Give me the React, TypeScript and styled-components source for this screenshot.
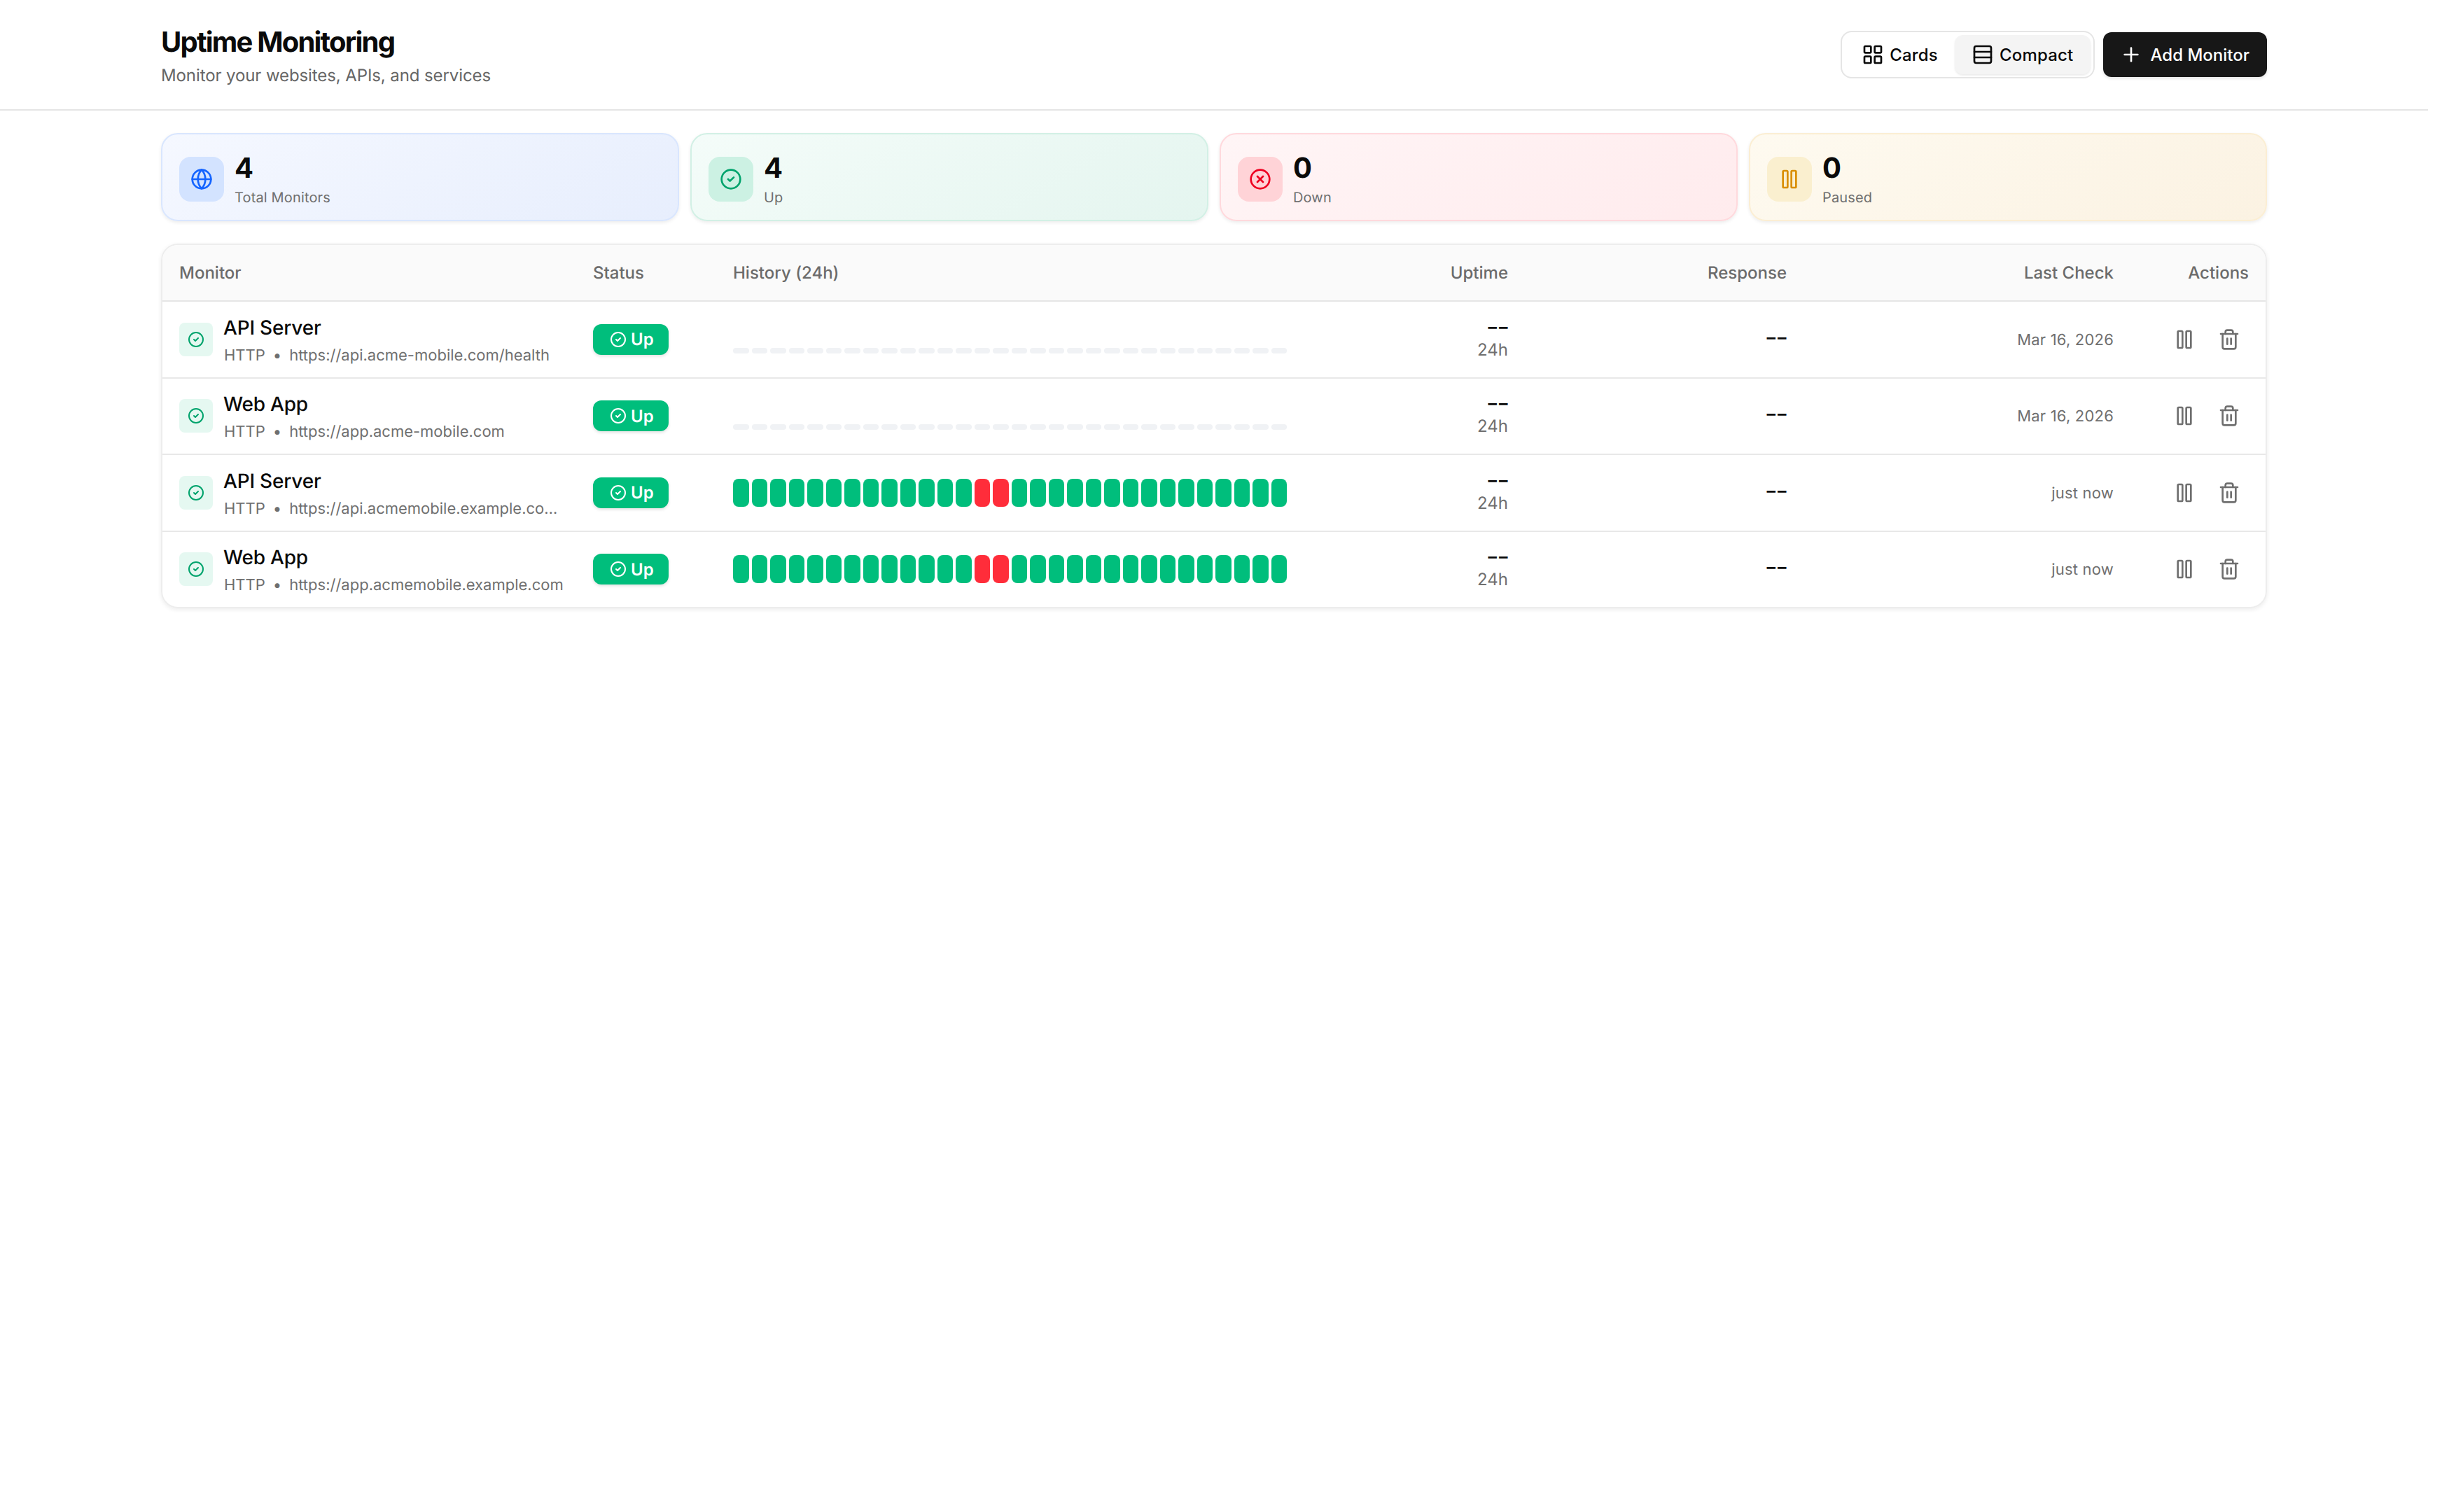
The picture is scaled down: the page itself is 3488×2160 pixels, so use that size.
import { CircleCheck, CircleX, Globe, LayoutGrid, Pause, Plus, Rows3, Trash2 } from 'lucide-react';
import styled, { createGlobalStyle } from 'styled-components';

const GlobalStyle = createGlobalStyle`
  html, body {
    margin: 0;
    background: #fff;
  }
  body {
    font-family: Inter, "Liberation Sans", sans-serif;
    color: #0a0a0a;
    text-rendering: geometricPrecision;
    -webkit-font-smoothing: antialiased;
  }
`;

const Page = styled.div`
  width: 3468px;
  min-height: 2160px;
`;

const Header = styled.header`
  height: 156px;
  padding: 0 230px;
  box-sizing: content-box;
  width: 3008px;
  display: flex;
  justify-content: space-between;
  align-items: center;
  border-bottom: 2px solid #e5e5e5;
`;

const TitleBlock = styled.div`
  padding-top: 4px;
`;

const Title = styled.h1`
  margin: 0 0 8px;
  font-size: 40px;
  line-height: 48px;
  font-weight: 700;
  letter-spacing: -1.8px;
`;

const Subtitle = styled.p`
  margin: 0;
  font-size: 24px;
  line-height: 32px;
  letter-spacing: -0.1px;
  color: #666;
`;

const HeaderActions = styled.div`
  display: flex;
  align-items: center;
  gap: 12px;
`;

const Toggle = styled.div`
  display: flex;
  padding: 4px;
  border: 2px solid #e5e5e5;
  border-radius: 16px;
  background: #fff;
`;

const ToggleButton = styled.button<{ $active?: boolean }>`
  display: flex;
  align-items: center;
  gap: 8px;
  height: 56px;
  padding: 0 24px;
  border: 0;
  border-radius: 12px;
  background: ${(p) => (p.$active ? '#f4f4f4' : 'transparent')};
  box-shadow: ${(p) => (p.$active ? '0 2px 3px rgba(0,0,0,0.08)' : 'none')};
  font: 500 24px Inter, sans-serif;
  letter-spacing: 0.2px;
  color: #0a0a0a;
`;

const AddButton = styled.button`
  display: flex;
  align-items: center;
  gap: 12px;
  height: 64px;
  padding: 0 25px 0 24px;
  border: 0;
  border-radius: 12px;
  background: #171717;
  color: #fff;
  font: 500 24px Inter, sans-serif;
  box-shadow: 0 2px 4px rgba(0, 0, 0, 0.12);
`;

const Content = styled.main`
  padding: 32px 230px;
`;

const StatGrid = styled.section`
  display: grid;
  grid-template-columns: repeat(4, 1fr);
  gap: 16px;
  margin-bottom: 32px;
`;

type Tone = { from: string; to: string; border: string; tile: string; ink: string };

const tones: Record<string, Tone> = {
  blue: { from: '#f5f8ff', to: '#e7eefd', border: '#d9e6fe', tile: '#d3e3ff', ink: '#1464ff' },
  green: { from: '#f4fcf9', to: '#e4f5ef', border: '#d2f0e5', tile: '#ccf1e3', ink: '#00a36c' },
  red: { from: '#fff5f6', to: '#ffebed', border: '#ffd9dd', tile: '#ffd3d7', ink: '#ee0020' },
  amber: { from: '#fefaf0', to: '#fbf2e2', border: '#fbeed3', tile: '#faefcf', ink: '#d98e00' },
};

const StatCard = styled.div<{ $tone: Tone }>`
  height: 126px;
  box-sizing: border-box;
  padding: 24px;
  display: flex;
  align-items: flex-start;
  gap: 15px;
  border: 2px solid ${(p) => p.$tone.border};
  border-radius: 24px;
  background: linear-gradient(150deg, ${(p) => p.$tone.from}, ${(p) => p.$tone.to});
  box-shadow: 0 2px 5px rgba(0, 0, 0, 0.08);
`;

const StatTile = styled.div<{ $tone: Tone }>`
  width: 64px;
  height: 64px;
  margin-top: 8px;
  display: flex;
  align-items: center;
  justify-content: center;
  border-radius: 16px;
  background: ${(p) => p.$tone.tile};
  color: ${(p) => p.$tone.ink};
`;

const StatValue = styled.div`
  font-size: 40px;
  line-height: 48px;
  font-weight: 700;
`;

const StatLabel = styled.div`
  margin-top: 6px;
  font-size: 20px;
  line-height: 24px;
  letter-spacing: 0.15px;
  color: #6f6f6f;
`;

const Table = styled.section`
  border: 2px solid #ededed;
  border-radius: 24px;
  overflow: hidden;
  box-shadow: 0 2px 6px rgba(0, 0, 0, 0.08);
`;

const columns = '591px 200px 841px 314px 398px 467px 193px';

const HeadRow = styled.div`
  display: grid;
  grid-template-columns: ${columns};
  height: 79px;
  align-items: center;
  background: #fafafa;
  border-bottom: 2px solid #e6e6e6;
`;

const HeadCell = styled.div<{ $right?: boolean }>`
  padding: 0 24px;
  text-align: ${(p) => (p.$right ? 'right' : 'left')};
  font-size: 24px;
  font-weight: 500;
  color: #6b6b6b;
`;

const Row = styled.div`
  display: grid;
  grid-template-columns: ${columns};
  height: 107.5px;
  align-items: center;
  border-bottom: 2px solid #e8e8e8;

  &:last-child {
    border-bottom: 0;
  }
`;

const Cell = styled.div<{ $right?: boolean }>`
  padding: 0 24px;
  min-width: 0;
  text-align: ${(p) => (p.$right ? 'right' : 'left')};
`;

const MonitorCell = styled(Cell)`
  display: flex;
  align-items: center;
  gap: 16px;
  padding-right: 16px;
`;

const MonitorTile = styled.div`
  flex: none;
  width: 48px;
  height: 48px;
  display: flex;
  align-items: center;
  justify-content: center;
  border-radius: 8px;
  background: #e5f8f1;
  color: #00a36c;
`;

const MonitorText = styled.div`
  min-width: 0;
`;

const MonitorName = styled.div`
  margin: 2px 0 0 -1px;
  font-size: 28px;
  line-height: 36px;
  font-weight: 500;
  letter-spacing: -0.2px;
`;

const MonitorMeta = styled.div`
  display: flex;
  gap: 11px;
  margin-top: 8px;
  font-size: 22px;
  line-height: 28px;
  color: #6f6f6f;
`;

const MonitorUrl = styled.span`
  overflow: hidden;
  white-space: nowrap;
  text-overflow: ellipsis;
`;

const UpBadge = styled.span`
  display: inline-flex;
  align-items: center;
  gap: 6px;
  height: 44px;
  width: 108px;
  box-sizing: border-box;
  padding: 0 24px;
  border-radius: 12px;
  background: #00be7c;
  color: #fff;
  font-size: 24px;
  font-weight: 600;
  box-shadow: 0 2px 4px rgba(0, 0, 0, 0.12);
`;

const BarCell = styled(Cell)`
  padding-right: 26px;
`;

const Bars = styled.div`
  display: flex;
  align-items: flex-end;
  gap: 4px;
  height: 40px;
`;

const Bar = styled.div<{ $kind: 'up' | 'down' | 'empty' }>`
  flex: 1;
  height: ${(p) => (p.$kind === 'empty' ? '8px' : '40px')};
  border-radius: ${(p) => (p.$kind === 'empty' ? '4px' : '8px')};
  background: ${(p) => (p.$kind === 'up' ? '#00be7c' : p.$kind === 'down' ? '#ff2d3a' : '#f0f2f5')};
`;

const Dashes = styled.div`
  font-size: 34px;
  line-height: 30px;
  font-weight: 400;
  letter-spacing: -2px;
  transform: scaleX(1.15);
  transform-origin: right center;
`;

const ResponseDashes = styled(Dashes)`
  padding-bottom: 4px;
`;

const UptimeWindow = styled.div`
  font-size: 24px;
  line-height: 34px;
  color: #6f6f6f;
`;

const LastCheck = styled.div`
  padding-top: 2px;
  font-size: 22px;
  letter-spacing: 0.2px;
  color: #6f6f6f;
`;

const ActionCell = styled(Cell)`
  display: flex;
  justify-content: flex-end;
  gap: 8px;
`;

const IconButton = styled.button`
  width: 56px;
  height: 56px;
  display: flex;
  align-items: center;
  justify-content: center;
  padding: 0;
  border: 0;
  background: transparent;
  color: #6f6f6f;
`;

const stats = [
  { tone: tones.blue, value: 4, label: 'Total Monitors', Icon: Globe },
  { tone: tones.green, value: 4, label: 'Up', Icon: CircleCheck },
  { tone: tones.red, value: 0, label: 'Down', Icon: CircleX },
  { tone: tones.amber, value: 0, label: 'Paused', Icon: Pause },
];

const monitors = [
  { name: 'API Server', url: 'https://api.acme-mobile.com/health', history: false, last: 'Mar 16, 2026' },
  { name: 'Web App', url: 'https://app.acme-mobile.com', history: false, last: 'Mar 16, 2026' },
  { name: 'API Server', url: 'https://api.acmemobile.example.com/health', history: true, last: 'just now' },
  { name: 'Web App', url: 'https://app.acmemobile.example.com', history: true, last: 'just now' },
];

function barKind(index: number, history: boolean) {
  if (!history) return 'empty';
  return index === 13 || index === 14 ? 'down' : 'up';
}

export default function App() {
  return (
    <Page>
      <GlobalStyle />
      <Header>
        <TitleBlock>
          <Title>Uptime Monitoring</Title>
          <Subtitle>Monitor your websites, APIs, and services</Subtitle>
        </TitleBlock>
        <HeaderActions>
          <Toggle>
            <ToggleButton>
              <LayoutGrid size={32} />
              Cards
            </ToggleButton>
            <ToggleButton $active>
              <Rows3 size={32} />
              Compact
            </ToggleButton>
          </Toggle>
          <AddButton>
            <Plus size={32} />
            Add Monitor
          </AddButton>
        </HeaderActions>
      </Header>
      <Content>
        <StatGrid>
          {stats.map((s) => (
            <StatCard key={s.label} $tone={s.tone}>
              <StatTile $tone={s.tone}>
                <s.Icon size={32} />
              </StatTile>
              <div>
                <StatValue>{s.value}</StatValue>
                <StatLabel>{s.label}</StatLabel>
              </div>
            </StatCard>
          ))}
        </StatGrid>
        <Table>
          <HeadRow>
            <HeadCell>Monitor</HeadCell>
            <HeadCell>Status</HeadCell>
            <HeadCell>History (24h)</HeadCell>
            <HeadCell $right>Uptime</HeadCell>
            <HeadCell $right>Response</HeadCell>
            <HeadCell $right>Last Check</HeadCell>
            <HeadCell $right>Actions</HeadCell>
          </HeadRow>
          {monitors.map((m) => (
            <Row key={m.url}>
              <MonitorCell>
                <MonitorTile>
                  <CircleCheck size={24} />
                </MonitorTile>
                <MonitorText>
                  <MonitorName>{m.name}</MonitorName>
                  <MonitorMeta>
                    <span>HTTP</span>
                    <span>•</span>
                    <MonitorUrl>{m.url}</MonitorUrl>
                  </MonitorMeta>
                </MonitorText>
              </MonitorCell>
              <Cell>
                <UpBadge>
                  <CircleCheck size={24} style={{ flex: 'none' }} />
                  Up
                </UpBadge>
              </Cell>
              <BarCell>
                <Bars>
                  {Array.from({ length: 30 }, (_, i) => (
                    <Bar key={i} $kind={barKind(i, m.history)} />
                  ))}
                </Bars>
              </BarCell>
              <Cell $right>
                <Dashes>--</Dashes>
                <UptimeWindow>24h</UptimeWindow>
              </Cell>
              <Cell $right>
                <ResponseDashes>--</ResponseDashes>
              </Cell>
              <Cell $right>
                <LastCheck>{m.last}</LastCheck>
              </Cell>
              <ActionCell>
                <IconButton aria-label="Pause">
                  <Pause size={32} />
                </IconButton>
                <IconButton aria-label="Delete">
                  <Trash2 size={32} />
                </IconButton>
              </ActionCell>
            </Row>
          ))}
        </Table>
      </Content>
    </Page>
  );
}
